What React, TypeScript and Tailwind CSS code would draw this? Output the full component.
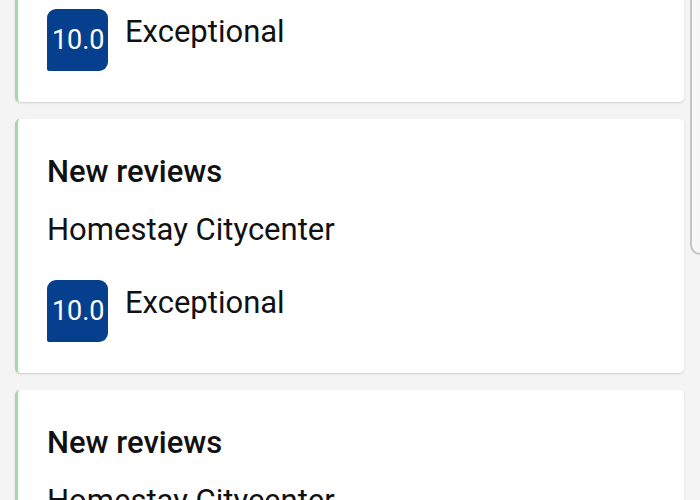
import React from "react";

function Badge() {
  return (
    <div className="w-[61px] h-[62px] shrink-0 bg-[#073f8f] rounded-tl-[9px] rounded-tr-[9px] rounded-br-[9px] rounded-bl-[2px] pl-[5px] pt-[18px]">
      <span className="block text-white text-[27px] leading-[27px] tracking-[-0.1px]">10.0</span>
    </div>
  );
}

function Card() {
  return (
    <div className="shrink-0 bg-white rounded-[5px] border-l-[3px] border-[#a6d9a8] shadow-[0_1px_2px_rgba(0,0,0,0.16)] pl-[29px] pt-[37px] pb-[31px]">
      <div className="text-[31px] leading-[31px] font-medium text-[#111111]">New reviews</div>
      <div className="mt-[27px] text-[31px] leading-[31px] text-[#111111]">Homestay Citycenter</div>
      <div className="mt-[35px] flex items-start gap-[17px]">
        <Badge />
        <div className="mt-[7px] text-[31px] leading-[31px] text-[#111111]">Exceptional</div>
      </div>
    </div>
  );
}

export default function App() {
  return (
    <div
      className="relative w-[700px] h-[500px] overflow-hidden bg-[#f4f4f4]"
      style={{ fontFamily: "Roboto, 'Noto Sans', sans-serif" }}
    >
      <div className="flex flex-col gap-[17px] pl-[15px] pr-[16px] mt-[-152px]">
        <Card />
        <Card />
        <Card />
      </div>
      <div className="absolute top-0 right-[-6px] w-[16px] h-[255px] bg-[#f7f7f7] border-l-2 border-b-2 border-[#c4c4c4] rounded-bl-[10px]" />
    </div>
  );
}
